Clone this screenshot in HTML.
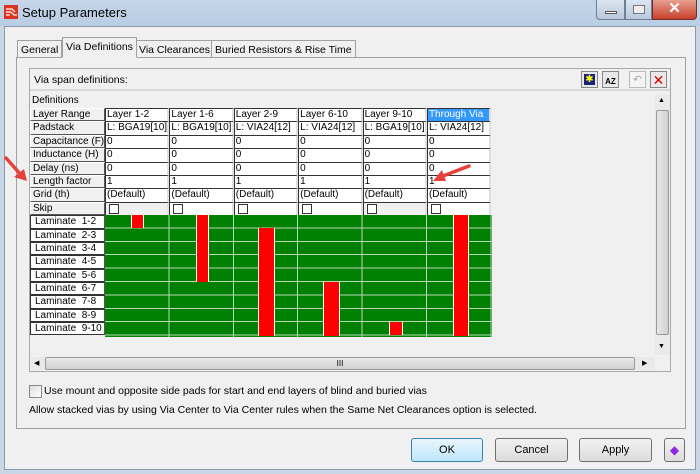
<!DOCTYPE html>
<html><head><meta charset="utf-8"><style>
*{box-sizing:border-box;margin:0;padding:0}
body{width:700px;height:474px;overflow:hidden;background:#c9d6e6;font-family:"Liberation Sans",sans-serif;font-size:11px;color:#000;position:relative}
.a{position:absolute}
.title{left:0;top:0;width:700px;height:26px;background:linear-gradient(#c5d5e8,#b9cde4)}
.body{left:4px;top:26px;width:692px;height:444px;background:#f0f0f0;border:1px solid #8a99ad}
.tab{top:38px;height:20px;border:1px solid #a0a0a0;border-bottom:none;background:#f0f0f0;padding:3px 3px 0;font-size:10.5px;white-space:nowrap}
.grid{position:absolute;left:30px;top:94px;display:grid;grid-template-columns:75px 64.4px 64.4px 64.4px 64.4px 64.4px 64.4px;grid-template-rows:14px repeat(16,13.4px)}
.l{background:#f0f0f0;border-top:1px solid #fff;border-left:1px solid #fff;border-right:1px solid #555;border-bottom:1px solid #555;padding-left:2px;line-height:11px;font-size:10px;white-space:nowrap;overflow:hidden}
.c{background:#fff;border-top:1px solid #333;border-left:1px solid #333;border-right:2px solid #e0e0e0;padding-left:1px;line-height:11px;font-size:10px;white-space:nowrap;overflow:hidden}
.lam{background:#fff;border:1px solid #333;border-right:1px solid #555;padding-left:4px;line-height:11px;font-size:10px;white-space:nowrap}
.cb{width:10px;height:10px;border:1px solid #333;background:#fff;margin:1px 0 0 2px}
.red{position:absolute;background:#f00;border-left:1px solid #fff;border-right:1px solid #fff}
.btn{top:438px;height:24px;border:1px solid #707070;border-radius:3px;background:linear-gradient(#f2f2f2,#dcdcdc);text-align:center;line-height:22px;font-size:11px}
</style></head><body>
<div class="a title"></div>
<svg class="a" style="left:4px;top:5px" width="14" height="14"><rect width="14" height="14" fill="#d32"/><path d="M2 4h6l3 3M2 7h5l3 3h3M2 10h4" stroke="#fff" stroke-width="1.2" fill="none"/></svg>
<div class="a" style="left:22px;top:5px;font-size:13px;color:#000">Setup Parameters</div>
<div class="a" style="left:596px;top:0;width:29px;height:20px;background:linear-gradient(#dce6f2,#b8c8dc);border:1px solid #6d7d94;border-top:none;border-radius:0 0 0 4px"><div class="a" style="left:8px;top:11px;width:12px;height:3px;background:#fff;border:1px solid #555"></div></div>
<div class="a" style="left:625px;top:0;width:27px;height:20px;background:linear-gradient(#dce6f2,#b8c8dc);border:1px solid #6d7d94;border-top:none"><div class="a" style="left:7px;top:5px;width:12px;height:9px;border:1px solid #777;background:#eee"></div></div>
<div class="a" style="left:652px;top:0;width:45px;height:20px;background:linear-gradient(#e8a090,#c7402c);border:1px solid #6d3030;border-top:none;border-radius:0 0 4px 0;color:#fff;font-weight:bold;font-size:15px;text-align:center;line-height:18px">✕</div>
<div class="a body"></div>
<div class="a" style="left:16px;top:57px;width:670px;height:372px;border:1px solid #a0a0a0;background:#f0f0f0"></div>
<div class="a tab" style="left:17px;top:40px;height:17px">General</div>
<div class="a tab" style="left:62px;top:37px;height:21px;background:#f0f0f0;border-bottom:1px solid #f0f0f0;z-index:2">Via Definitions</div>
<div class="a tab" style="left:135px;top:40px;height:17px">Via Clearances</div>
<div class="a tab" style="left:211px;top:40px;height:17px">Buried Resistors &amp; Rise Time</div>
<div class="a" style="left:29px;top:68px;width:642px;height:304px;border:1px solid #a8a8a8;background:#f0f0f0"></div>
<div class="a" style="left:30px;top:69px;width:640px;height:22px;border-bottom:2px solid #d8d8d8"></div>
<div class="a" style="left:34px;top:74px;font-size:10.5px">Via span definitions:</div>
<div class="a" style="left:581px;top:71px;width:17px;height:17px;border:1px solid #888;background:#e8e8e8"><div style="margin:2px;width:11px;height:11px;background:#1a237e;color:#ff0;font-size:10px;line-height:11px;text-align:center">✱</div></div>
<div class="a" style="left:602px;top:71px;width:17px;height:17px;border:1px solid #888;background:#e8e8e8;font-size:8px;font-weight:bold;text-align:center;line-height:20px">AZ</div>
<div class="a" style="left:629px;top:71px;width:17px;height:17px;border:1px solid #bbb;background:#f4f4f4;color:#aaa;text-align:center;line-height:16px">↶</div>
<div class="a" style="left:650px;top:71px;width:17px;height:17px;border:1px solid #888;background:#e8e8e8;color:#d00;text-align:center;line-height:16px;font-size:14px">✕</div>
<div class="a" style="left:655px;top:95px;width:15px;height:260px;background:#eaeaea"></div>
<div class="a" style="left:656px;top:110px;width:13px;height:225px;background:linear-gradient(90deg,#e8e8e8,#d0d0d0);border:1px solid #999;border-radius:2px"></div>
<div class="a" style="left:658px;top:97px;font-size:7px">▲</div>
<div class="a" style="left:658px;top:343px;font-size:7px">▼</div>
<div class="a" style="left:31px;top:357px;width:624px;height:13px;background:#eaeaea"></div>
<div class="a" style="left:45px;top:357px;width:590px;height:13px;background:linear-gradient(#e8e8e8,#d0d0d0);border:1px solid #999;border-radius:2px;text-align:center;font-size:8px;line-height:11px">III</div>
<div class="a" style="left:34px;top:359px;font-size:7px">◀</div>
<div class="a" style="left:642px;top:359px;font-size:7px">▶</div>
<div class="a" style="left:105px;top:215px;width:387px;height:122px;background:#008000;
background-image:repeating-linear-gradient(180deg,transparent 0 12.4px,#b8d8b8 12.4px 13.4px),repeating-linear-gradient(90deg,transparent 0 63.4px,#b8d8b8 63.4px 64.4px)"></div>
<div class="red" style="left:131px;top:215px;width:13px;height:13.4px"></div>
<div class="red" style="left:196px;top:215px;width:13px;height:67px"></div>
<div class="red" style="left:258px;top:228.4px;width:17px;height:107.2px"></div>
<div class="red" style="left:323px;top:282px;width:17px;height:53.6px"></div>
<div class="red" style="left:389px;top:322px;width:14px;height:13.4px"></div>
<div class="red" style="left:453px;top:215px;width:16px;height:121px"></div>
<div class="grid">
<div class="l" style="grid-column:1/8;border:none;background:#f0f0f0;padding-top:1px">Definitions</div>
<div class="l">Layer Range</div><div class="c">Layer 1-2</div><div class="c">Layer 1-6</div><div class="c">Layer 2-9</div><div class="c">Layer 6-10</div><div class="c">Layer 9-10</div><div class="c" style="background:#3399ff;color:#fff">Through Via</div>
<div class="l">Padstack</div><div class="c">L: BGA19[10]</div><div class="c">L: BGA19[10]</div><div class="c">L: VIA24[12]</div><div class="c">L: VIA24[12]</div><div class="c">L: BGA19[10]</div><div class="c">L: VIA24[12]</div>
<div class="l">Capacitance (F)</div><div class="c">0</div><div class="c">0</div><div class="c">0</div><div class="c">0</div><div class="c">0</div><div class="c">0</div>
<div class="l">Inductance (H)</div><div class="c">0</div><div class="c">0</div><div class="c">0</div><div class="c">0</div><div class="c">0</div><div class="c">0</div>
<div class="l">Delay (ns)</div><div class="c">0</div><div class="c">0</div><div class="c">0</div><div class="c">0</div><div class="c">0</div><div class="c">0</div>
<div class="l">Length factor</div><div class="c">1</div><div class="c">1</div><div class="c">1</div><div class="c">1</div><div class="c">1</div><div class="c">1</div>
<div class="l">Grid (th)</div><div class="c">(Default)</div><div class="c">(Default)</div><div class="c">(Default)</div><div class="c">(Default)</div><div class="c">(Default)</div><div class="c">(Default)</div>
<div class="l">Skip</div><div class="c" style="background:#f0f0f0"><div class="cb"></div></div><div class="c"><div class="cb"></div></div><div class="c"><div class="cb"></div></div><div class="c"><div class="cb"></div></div><div class="c" style="background:#f0f0f0"><div class="cb"></div></div><div class="c"><div class="cb"></div></div>
<div class="lam" style="grid-column:1">Laminate&nbsp; 1-2</div>
<div class="lam" style="grid-column:1">Laminate&nbsp; 2-3</div>
<div class="lam" style="grid-column:1">Laminate&nbsp; 3-4</div>
<div class="lam" style="grid-column:1">Laminate&nbsp; 4-5</div>
<div class="lam" style="grid-column:1">Laminate&nbsp; 5-6</div>
<div class="lam" style="grid-column:1">Laminate&nbsp; 6-7</div>
<div class="lam" style="grid-column:1">Laminate&nbsp; 7-8</div>
<div class="lam" style="grid-column:1">Laminate&nbsp; 8-9</div>
<div class="lam" style="grid-column:1">Laminate&nbsp; 9-10</div>
</div>
<svg class="a" style="left:0;top:150px" width="40" height="35"><path d="M6 8L22 26" stroke="#e8403a" stroke-width="3.5" stroke-linecap="round"/><path d="M27 31L14 27L24 19Z" fill="#e8403a"/></svg>
<svg class="a" style="left:425px;top:160px" width="50" height="30"><path d="M44 6L18 16" stroke="#e8403a" stroke-width="3.5" stroke-linecap="round"/><path d="M8 21L17 10L21 21Z" fill="#e8403a"/></svg>
<div class="a" style="left:29px;top:385px;width:13px;height:13px;border:1px solid #888;background:linear-gradient(135deg,#ddd,#fff)"></div>
<div class="a" style="left:44px;top:385px;font-size:10.5px">Use mount and opposite side pads for start and end layers of blind and buried vias</div>
<div class="a" style="left:29px;top:404px;font-size:10.5px">Allow stacked vias by using Via Center to Via Center rules when the Same Net Clearances option is selected.</div>
<div class="a btn" style="left:411px;width:72px;border-color:#3c7fb1;background:linear-gradient(#eaf6fd,#bee6fd)">OK</div>
<div class="a btn" style="left:495px;width:73px">Cancel</div>
<div class="a btn" style="left:579px;width:73px">Apply</div>
<div class="a btn" style="left:664px;width:21px;color:#8a2be2;font-size:12px">◆</div>
</body></html>
